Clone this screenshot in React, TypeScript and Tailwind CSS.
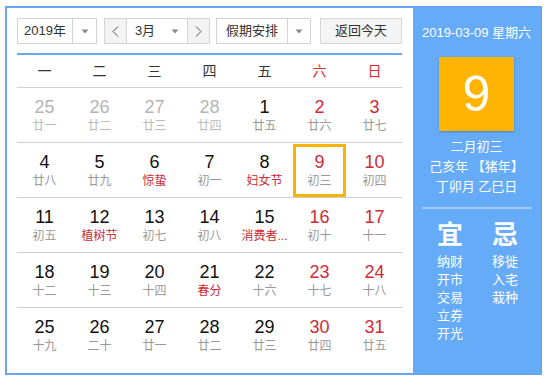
import React from "react";

type Day = {
  d: number;
  lunar: string;
  muted?: boolean;
  red?: boolean;
  fest?: boolean;
  today?: boolean;
};

const weekdays = ["一", "二", "三", "四", "五", "六", "日"];

const rows: Day[][] = [
  [
    { d: 25, lunar: "廿一", muted: true },
    { d: 26, lunar: "廿二", muted: true },
    { d: 27, lunar: "廿三", muted: true },
    { d: 28, lunar: "廿四", muted: true },
    { d: 1, lunar: "廿五" },
    { d: 2, lunar: "廿六", red: true },
    { d: 3, lunar: "廿七", red: true },
  ],
  [
    { d: 4, lunar: "廿八" },
    { d: 5, lunar: "廿九" },
    { d: 6, lunar: "惊蛰", fest: true },
    { d: 7, lunar: "初一" },
    { d: 8, lunar: "妇女节", fest: true },
    { d: 9, lunar: "初三", red: true, today: true },
    { d: 10, lunar: "初四", red: true },
  ],
  [
    { d: 11, lunar: "初五" },
    { d: 12, lunar: "植树节", fest: true },
    { d: 13, lunar: "初七" },
    { d: 14, lunar: "初八" },
    { d: 15, lunar: "消费者...", fest: true },
    { d: 16, lunar: "初十", red: true },
    { d: 17, lunar: "十一", red: true },
  ],
  [
    { d: 18, lunar: "十二" },
    { d: 19, lunar: "十三" },
    { d: 20, lunar: "十四" },
    { d: 21, lunar: "春分", fest: true },
    { d: 22, lunar: "十六" },
    { d: 23, lunar: "十七", red: true },
    { d: 24, lunar: "十八", red: true },
  ],
  [
    { d: 25, lunar: "十九" },
    { d: 26, lunar: "二十" },
    { d: 27, lunar: "廿一" },
    { d: 28, lunar: "廿二" },
    { d: 29, lunar: "廿三" },
    { d: 30, lunar: "廿四", red: true },
    { d: 31, lunar: "廿五", red: true },
  ],
];

const yi = ["纳财", "开市", "交易", "立券", "开光"];
const ji = ["移徙", "入宅", "栽种"];

function Caret() {
  return (
    <svg width="8" height="5" viewBox="0 0 8 5">
      <path d="M0.5 0.5 L7.5 0.5 L4 4.5 Z" fill="#8a8a8a" />
    </svg>
  );
}

function Chevron({ dir }: { dir: "left" | "right" }) {
  return (
    <svg width="7" height="11" viewBox="0 0 7 11">
      <path
        d={dir === "left" ? "M6 0.5 L1 5.5 L6 10.5" : "M1 0.5 L6 5.5 L1 10.5"}
        fill="none"
        stroke="#555"
        strokeWidth="1"
      />
    </svg>
  );
}

function Select({ label, w, textW }: { label: string; w: string; textW: string }) {
  return (
    <div className={`flex h-[26px] ${w} border border-[#d3d3d3] bg-white`}>
      <div className={`flex ${textW} items-center justify-center border-r border-[#d3d3d3] text-[13px] text-[#333]`}>
        {label}
      </div>
      <div className="flex flex-1 items-center justify-center">
        <Caret />
      </div>
    </div>
  );
}

export default function App() {
  return (
    <div
      className="h-[381px] w-[547px] bg-white pl-[5px] pt-[6px]"
      style={{ fontFamily: '"Liberation Sans", Arial, "Noto Sans CJK SC", sans-serif' }}
    >
      <div className="flex h-[369px] w-[537px] border-2 border-[#65a6ec]">
        <div className="w-[406px] pl-[10px] pr-[11px] pt-[10px]">
          <div className="flex h-[26px] items-center">
            <Select label="2019年" w="w-[80px]" textW="w-[55px]" />

            <div className="ml-[7px] flex h-[26px] w-[106px] border border-[#d3d3d3] bg-white">
              <div className="flex w-[22px] items-center justify-center border-r border-[#d3d3d3] bg-[#f3f3f3]">
                <Chevron dir="left" />
              </div>
              <div className="flex w-[36px] items-center justify-center text-[13px] text-[#333]">
                3月
              </div>
              <div className="flex w-[24px] items-center justify-center">
                <Caret />
              </div>
              <div className="flex flex-1 items-center justify-center border-l border-[#d3d3d3] bg-[#f3f3f3]">
                <Chevron dir="right" />
              </div>
            </div>

            <div className="ml-[6px]">
              <Select label="假期安排" w="w-[95px]" textW="w-[71px]" />
            </div>

            <div className="ml-[9px] flex h-[26px] w-[82px] items-center justify-center border border-[#d8d8d8] bg-[#f4f4f4] text-[13px] text-[#333]">
              返回今天
            </div>
          </div>

          <div className="mt-[9px] h-[2px] bg-[#6aa8ec]" />

          <div className="grid h-[33px] grid-cols-7 border-b border-[#cfcfcf] text-[14px]">
            {weekdays.map((w, i) => (
              <div
                key={w}
                className={`flex items-center justify-center ${i >= 5 ? "text-[#d9302f]" : "text-[#333]"}`}
              >
                {w}
              </div>
            ))}
          </div>

          {rows.map((row, ri) => (
            <div
              key={ri}
              className={`grid h-[55px] grid-cols-7 ${ri < rows.length - 1 ? "border-b border-[#cfcfcf]" : ""}`}
            >
              {row.map((day, di) => (
                <div key={di} className="flex items-center justify-center">
                  <div
                    className={`flex h-[53px] w-[53px] flex-col items-center justify-center ${
                      day.today ? "border-[3px] border-[#f7b500]" : ""
                    }`}
                  >
                    <span
                      className={`text-[18px] leading-[20px] ${
                        day.muted ? "text-[#b5b5b5]" : day.red ? "text-[#cf2b36]" : "text-[#111]"
                      }`}
                    >
                      {day.d}
                    </span>
                    <span
                      className={`mt-[1px] whitespace-nowrap text-[12px] leading-[16px] ${
                        day.fest ? "text-[#cd2a34]" : day.muted ? "text-[#bbb]" : "text-[#999]"
                      }`}
                    >
                      {day.lunar}
                    </span>
                  </div>
                </div>
              ))}
            </div>
          ))}
        </div>

        <div className="flex flex-1 flex-col items-center bg-[#65abf8] text-white">
          <div className="mt-[16px] text-[13px] leading-[18px]">2019-03-09 星期六</div>

          <div className="mt-[15px] flex h-[74px] w-[75px] items-center justify-center bg-[#ffb401] text-[50px] shadow-[0_1px_2px_rgba(0,0,0,0.25)]">
            9
          </div>

          <div className="mt-[6px] flex flex-col items-center text-[13px] leading-[20px]">
            <span>二月初三</span>
            <span>己亥年 【猪年】</span>
            <span>丁卯月 乙巳日</span>
          </div>

          <div className="mt-[10px] h-[2px] w-[110px] bg-[#9fcaf7]" />

          <div className="mt-[11px] flex justify-center gap-[29px] pl-[2px]">
            <div className="flex flex-col items-center">
              <span className="text-[26px] leading-[30px] font-semibold">宜</span>
              <div className="mt-[3px] flex flex-col text-[13px] leading-[18px]">
                {yi.map((t) => (
                  <span key={t}>{t}</span>
                ))}
              </div>
            </div>
            <div className="flex flex-col items-center">
              <span className="text-[26px] leading-[30px] font-semibold">忌</span>
              <div className="mt-[3px] flex flex-col text-[13px] leading-[18px]">
                {ji.map((t) => (
                  <span key={t}>{t}</span>
                ))}
              </div>
            </div>
          </div>
        </div>
      </div>
    </div>
  );
}
